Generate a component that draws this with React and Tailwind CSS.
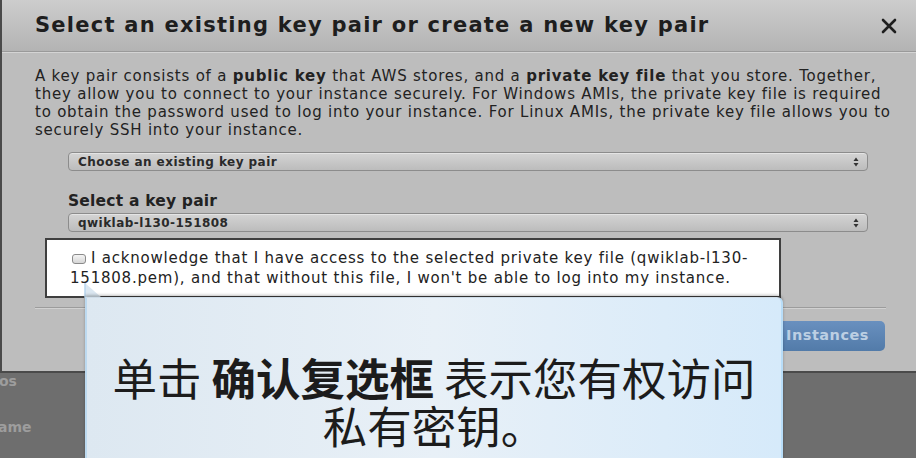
import React from "react";

const body = { fontFamily: '"DejaVu Sans", "Liberation Sans", sans-serif' };
const cjk = { fontFamily: '"Noto Sans CJK SC", "Noto Sans", sans-serif' };

function SelectBox({ children }) {
  return (
    <div className="flex h-[19px] w-[800px] items-center justify-between rounded-[4px] border border-[#8c8c8c] bg-gradient-to-b from-[#d4d4d4] to-[#bcbcbc] pl-[9px] pr-[8px] shadow-[inset_0_1px_0_rgba(255,255,255,0.4)]">
      <span className="text-[12px] font-bold leading-none tracking-[0.45px] text-[#2a2a2a]" style={body}>
        {children}
      </span>
      <svg width="6" height="10" viewBox="0 0 6 10">
        <path d="M3 0.5 L5.5 4 L0.5 4 Z" fill="#333" />
        <path d="M3 9.5 L5.5 6 L0.5 6 Z" fill="#333" />
      </svg>
    </div>
  );
}

export default function App() {
  return (
    <div className="relative flex h-[458px] w-[916px] flex-col overflow-hidden bg-[#6e6e6e]">
      {/* modal */}
      <div className="flex h-[373px] w-[916px] shrink-0 flex-col border-b-2 border-l-2 border-[#4a4a4a] bg-[#bdbdbd]">
        <div className="flex h-[52px] shrink-0 items-center justify-between border-b border-[#9a9a9a] bg-gradient-to-b from-[#cdcdcd] to-[#b3b3b3] pl-[33px] pr-[18px] shadow-[0_1px_0_rgba(255,255,255,0.35)]">
          <h1 className="whitespace-nowrap text-[21px] font-bold tracking-[1.25px] text-[#1e1e1e]" style={body}>
            Select an existing key pair or create a new key pair
          </h1>
          <svg width="18" height="18" viewBox="0 0 18 18" className="mt-[1px]">
            <path d="M3 3 L15 15 M15 3 L3 15" stroke="#1e1e1e" strokeWidth="2.6" strokeLinecap="round" />
          </svg>
        </div>

        <div className="flex flex-col pl-[33px] pr-[10px] pt-[15px]">
          <p className="whitespace-nowrap text-[15px] leading-[18px] tracking-[0.78px] text-[#222]" style={body}>
            A key pair consists of a <b>public key</b> that AWS stores, and a <b>private key file</b> that you store. Together,
            <br />
            they allow you to connect to your instance securely. For Windows AMIs, the private key file is required
            <br />
            to obtain the password used to log into your instance. For Linux AMIs, the private key file allows you to
            <br />
            securely SSH into your instance.
          </p>

          <div className="mt-[13px] pl-[33px]">
            <SelectBox>Choose an existing key pair</SelectBox>
          </div>

          <div className="mt-[21px] pl-[33px] text-[15.5px] font-bold leading-[18px] tracking-[0.2px] text-[#222]" style={body}>
            Select a key pair
          </div>
          <div className="mt-[3px] pl-[33px]">
            <SelectBox>qwiklab-l130-151808</SelectBox>
          </div>

          <div className="ml-[10px] mt-[6px] h-[60px] w-[736px] border-2 border-[#3f3f3f] bg-white pl-[23px] pt-[8px]">
            <p className="whitespace-nowrap text-[15px] leading-[20px] tracking-[0.78px] text-[#222]" style={body}>
              <span className="ml-[2px] mr-[5px] inline-block h-[10px] w-[14px] rounded-[3px] border border-[#8a8a8a] bg-gradient-to-b from-[#f4f4f4] to-[#d6d6d6] align-[-1px]" />
              I acknowledge that I have access to the selected private key file (qwiklab-l130-
              <br />
              151808.pem), and that without this file, I won't be able to log into my instance.
            </p>
          </div>

          <div className="mt-[9px] mr-[20px] h-px bg-[#9c9c9c] shadow-[0_1px_0_rgba(255,255,255,0.3)]" />

          <div className="mt-[13px] flex justify-end pr-[21px]">
            <div
              className="flex h-[30px] items-center rounded-[5px] bg-gradient-to-b from-[#6990bf] to-[#527ba9] pl-[18px] pr-[16px] text-[14.5px] font-bold tracking-[0.5px] text-[#bccfe3]"
              style={body}
            >
              Launch Instances
            </div>
          </div>
        </div>
      </div>

      {/* background page strip */}
      <div className="flex flex-col pt-[1px] text-[14px] font-bold leading-none text-[#9d9d9d]" style={body}>
        <span className="-ml-[1px]">os</span>
        <span className="mt-[32px] -ml-[2px]">ame</span>
      </div>

      {/* callout */}
      <svg className="absolute left-[84px] top-[283px]" width="20" height="16" viewBox="0 0 20 16">
        <path d="M1 0 L1 15 L18 15 Z" fill="#dbe7f1" />
        <path d="M1 0 L1 15" stroke="#b9d6ee" strokeWidth="1.5" />
      </svg>
      <div className="absolute left-[85px] top-[297px] flex h-[170px] w-[698px] flex-col items-center rounded-tr-[6px] border-l-2 border-r-2 border-t border-l-[#bcd9ef] border-r-[#b8ddf8] border-t-[#cfdde9] bg-gradient-to-r from-[#dde8f1] via-[#e8f0f7] to-[#d6eafa] pt-[55px] shadow-[0_-2px_3px_rgba(0,0,0,0.25)]">
        <div className="whitespace-nowrap text-center text-[44.5px] leading-[48px] text-[#1c1c1c]" style={cjk}>
          单击 <b className="font-bold">确认复选框</b> 表示您有权访问
          <br />
          私有密钥。
        </div>
      </div>
    </div>
  );
}
